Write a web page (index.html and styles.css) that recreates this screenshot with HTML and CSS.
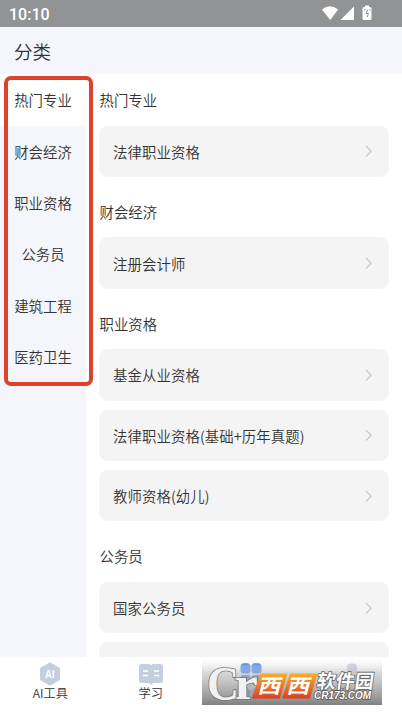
FILE: index.html
```html
<!DOCTYPE html>
<html lang="zh-CN">
<head>
<meta charset="utf-8">
<title>分类</title>
<link rel="stylesheet" href="styles.css">
</head>
<body>
<div class="app">
  <div class="status">
    <span class="clock">10:10</span>
    <svg class="status-icons" width="52" height="17" viewBox="0 0 52 17">
      <path d="M0 4.500Q8 -2 16 4.500L8.300 15Z" fill="#fff"/>
      <path d="M18.500 15L32 1.500V15Z" fill="#fff"/>
      <path d="M43 .5h4v1.500h1a1.500 1.500 0 0 1 1.500 1.500v10a1.500 1.500 0 0 1-1.500 1.500h-6a1.500 1.500 0 0 1-1.500-1.500v-10A1.500 1.500 0 0 1 42 2h1z" fill="#fff"/>
      <path d="M42.500 5.500l1-1.500M47.500 4l1 1.500M45.800 4.500l-1.800 4h2.500l-1.300 3.500" fill="none" stroke="#929394"/>
    </svg>
  </div>
  <header class="header">分类</header>
  <main class="main">
    <nav class="side">
      <div class="cat active">热门专业</div>
      <div class="cat">财会经济</div>
      <div class="cat">职业资格</div>
      <div class="cat">公务员</div>
      <div class="cat">建筑工程</div>
      <div class="cat">医药卫生</div>
    </nav>
    <div class="content">
      <h2 class="title">热门专业</h2>
      <div class="card">法律职业资格<svg class="chev" viewBox="0 0 8 14"><path d="M1 1l6 6-6 6"/></svg></div>
      <h2 class="title">财会经济</h2>
      <div class="card">注册会计师<svg class="chev" viewBox="0 0 8 14"><path d="M1 1l6 6-6 6"/></svg></div>
      <h2 class="title">职业资格</h2>
      <div class="card">基金从业资格<svg class="chev" viewBox="0 0 8 14"><path d="M1 1l6 6-6 6"/></svg></div>
      <div class="card">法律职业资格(基础+历年真题)<svg class="chev" viewBox="0 0 8 14"><path d="M1 1l6 6-6 6"/></svg></div>
      <div class="card">教师资格(幼儿)<svg class="chev" viewBox="0 0 8 14"><path d="M1 1l6 6-6 6"/></svg></div>
      <h2 class="title">公务员</h2>
      <div class="card">国家公务员<svg class="chev" viewBox="0 0 8 14"><path d="M1 1l6 6-6 6"/></svg></div>
      <div class="card"></div>
    </div>
  </main>
  <footer class="tabs">
    <div class="tab">
      <svg width="24" height="24" viewBox="0 0 24 24"><path d="M12 1.500L21 6.500V17.500L12 22.500L3 17.500V6.500Z" fill="#c5cedd" stroke="#c5cedd" stroke-width="3" stroke-linejoin="round" transform="translate(.6 .6) scale(.95)"/><text class="ai" x="12" y="15.800" text-anchor="middle" textLength="9.500" lengthAdjust="spacingAndGlyphs">AI</text></svg>
      <span>AI工具</span>
    </div>
    <div class="tab">
      <svg width="24" height="24" viewBox="0 0 24 24"><path d="M3 2h6.500q1.500 0 2.500 1.200Q13 2 14.500 2H21q3 0 3 3v13q0 3-3 3h-6.500L12 22.800 9.500 21H3q-3 0-3-3V5q0-3 3-3z" fill="#c5cedd"/><path d="M4 9h5M4 13.500h5M15 9h5M15 13.500h5" stroke="#fff" stroke-width="1.300"/></svg>
      <span>学习</span>
    </div>
    <div class="tab current">
      <svg width="24" height="24" viewBox="0 0 24 24"><g fill="#4588fb"><rect x="1.500" y="1.500" width="10" height="10" rx="3"/><rect x="12.500" y="1.500" width="10" height="10" rx="3"/><rect x="1.500" y="13" width="10" height="10" rx="3"/><rect x="12.500" y="13" width="10" height="10" rx="3"/></g><path d="M3.500 2h6M14.500 2h6" stroke="#1c57bd"/></svg>
      <span>分类</span>
    </div>
    <div class="tab">
      <svg width="24" height="24" viewBox="0 0 24 24"><g fill="#c5cedd"><rect x="7" y="1.500" width="10" height="10" rx="4"/><rect x="3" y="13" width="18" height="9" rx="4"/></g></svg>
      <span>我的</span>
    </div>
  </footer>
  <div class="marker"></div>
  <svg class="brand" width="180" height="49" viewBox="0 0 180 49">
    <defs>
      <linearGradient id="shade" x2="0" y2="1"><stop offset="0" stop-color="#fff" stop-opacity=".05"/><stop offset=".35" stop-color="#bbb" stop-opacity=".6"/><stop offset="1" stop-color="#777" stop-opacity=".93"/></linearGradient>
      <linearGradient id="flame" x2="0" y2="1"><stop stop-color="#f5b02e"/><stop offset="1" stop-color="#df3f20"/></linearGradient>
    </defs>
    <rect width="180" height="49" fill="url(#shade)"/>
    <text class="logo small" x="32" y="43" textLength="24" lengthAdjust="spacingAndGlyphs">r</text>
    <text class="logo big" x="5" y="44" textLength="32" lengthAdjust="spacingAndGlyphs">C</text>
    <path d="M58.500 17.500H85.500L78 42.500H50Z" fill="url(#flame)"/>
    <path d="M89.500 17.500H117L109.500 42.500H81.500Z" fill="url(#flame)" transform="translate(-1.500 0)"/>
    <g transform="translate(0 38) skewX(-14) scale(1 .78)">
      <text class="west" x="55" y="-1" textLength="23" lengthAdjust="spacingAndGlyphs">西</text>
      <text class="west" x="84" y="-1" textLength="23" lengthAdjust="spacingAndGlyphs">西</text>
    </g>
    <g transform="translate(0 32) skewX(-8)"><text class="park" x="114" y="-.5" textLength="57">软件园</text></g>
    <text class="domain" x="112" y="42.500" textLength="57" lengthAdjust="spacingAndGlyphs">CR173.COM</text>
  </svg>
</div>
</body>
</html>
```
FILE: styles.css
```css
* { box-sizing: border-box; }
body { margin: 0; background: #fff; }
.app {
  position: relative;
  width: 402px;
  height: 715px;
  overflow: hidden;
  display: flex;
  flex-direction: column;
  font-family: "Noto Sans CJK SC", sans-serif;
  font-size: 14.4px;
  font-weight: 350;
  color: #333;
}
.status {
  height: 27px;
  flex: none;
  display: flex;
  align-items: center;
  justify-content: space-between;
  padding: 0 28px 0 9px;
  background: #929394;
}
.clock { font: 500 16px/27px Roboto, sans-serif; color: #fff; padding-top: 1px; }
.status-icons { margin-top: -1px; }
.header {
  height: 47px;
  flex: none;
  padding-left: 14px;
  background: #f5f6fb;
  font-size: 18.6px;
  line-height: 47px;
}
.main { height: 583px; flex: none; display: flex; overflow: hidden; }
.side { width: 86px; background: #f5f6fb; }
.cat { height: 51.4px; line-height: 52.4px; text-align: center; }
.active { height: 51.6px; background: #fff; }
.content { flex: 1; padding: 0 13px; }
.title { margin: 0; height: 51.6px; padding-left: .5px; font-size: 14.4px; font-weight: 350; line-height: 52px; }
.card {
  height: 51.2px;
  margin-bottom: 9.1px;
  padding: 0 17px 0 14px;
  display: flex;
  align-items: center;
  justify-content: space-between;
  border-radius: 9px;
  background: #f4f4f4;
  letter-spacing: .1px;
}
.chev { width: 7px; height: 12.5px; margin-top: 1px; fill: none; stroke: #c8c8c8; stroke-width: 1.3; overflow: visible; }
.tabs { height: 58px; display: flex; background: #fff; }
.tab {
  flex: 1;
  display: flex;
  flex-direction: column;
  align-items: center;
  padding-top: 5px;
  font-size: 12.2px;
  line-height: 15.4px;
}
.current { color: #2c6fe4; }
.ai { font: 700 10px "Open Sans", sans-serif; fill: #fff; }
.marker {
  position: absolute;
  left: 4px;
  top: 76px;
  width: 89px;
  height: 310px;
  border: 4px solid #df422c;
  border-radius: 7px;
}
.brand { position: absolute; left: 202px; top: 656px; }
.logo { font-family: "Liberation Serif", serif; fill: #f1f1f1; stroke: #777; stroke-width: 1.6px; paint-order: stroke; font-weight: 700; }
.big { font-size: 48px; }
.small { font-size: 46px; }
.west { font: 700 25px "Noto Sans CJK SC", sans-serif; fill: #fff; }
.park { font: 700 19px "Noto Sans CJK SC", sans-serif; fill: #fff; stroke: #666; stroke-width: 1.6px; paint-order: stroke; }
.domain { font: italic 700 10px "Liberation Sans", sans-serif; fill: #fff; stroke: #555; stroke-width: 1.4px; paint-order: stroke; }
```
